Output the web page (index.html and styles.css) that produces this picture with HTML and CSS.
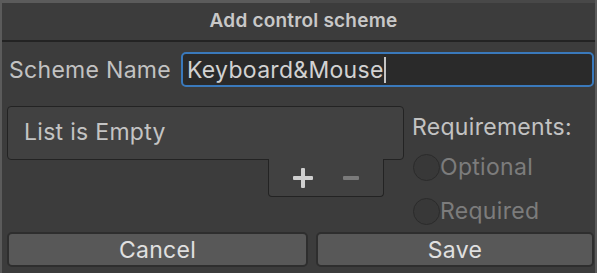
FILE: index.html
```html
<!DOCTYPE html>
<html lang="en">
<head>
    <meta charset="UTF-8">
    <meta name="viewport" content="width=device-width, initial-scale=1.0">
    <title>Add control scheme</title>
    <link rel="stylesheet" href="styles.css">
</head>
<body>
    <div class="window">
        <div class="top-strip"></div>
        <div class="titlebar">Add control scheme</div>

        <div class="content">
            <div class="name-row">
                <label for="schemeName">Scheme Name</label>
                <div class="text-field"><span id="schemeName">Keyboard&amp;Mouse</span><span class="caret"></span></div>
            </div>

            <div class="middle">
                <div class="list">
                    <div class="list-body">List is Empty</div>
                    <div class="list-footer">
                        <span class="plus"></span>
                        <span class="minus"></span>
                    </div>
                </div>

                <div class="requirements">
                    <div class="req-title">Requirements:</div>
                    <label class="radio"><span class="circle"></span>Optional</label>
                    <label class="radio"><span class="circle"></span>Required</label>
                </div>
            </div>

            <div class="buttons">
                <button class="cancel">Cancel</button>
                <button class="save">Save</button>
            </div>
        </div>
    </div>
</body>
</html>
```

FILE: styles.css
```css
html, body {
    margin: 0;
    height: 100%;
    background-color: #3e3e3e;
}
body {
    font-family: Inter, "Noto Sans", sans-serif;
    color: #c4c4c4;
    overflow: hidden;
}
.window {
    height: 273px;
    box-sizing: border-box;
    border-left: 2px solid #5b5b5b;
    border-right: 2px solid #5b5b5b;
    background-color: #3c3c3c;
    display: flex;
    flex-direction: column;
}
/* lighter tab edge on the left, darker on the right */
.top-strip {
    height: 3px;
    background: linear-gradient(to right, #5b5b5b 308px, #484848 308px);
}
.titlebar {
    height: 37px;
    line-height: 36px;
    text-align: center;
    font-weight: 600;
    font-size: 19px;
    letter-spacing: 0.2px;
    color: #c8c8c8;
    padding-left: 10px;
    border-bottom: 2px solid #232323;
    background-color: #3c3c3c;
}
.content {
    flex: 1;
    padding: 10px 1px 6px 5px;
    display: flex;
    flex-direction: column;
}
.name-row {
    display: flex;
    align-items: center;
    gap: 3px;
    height: 35px;
}
.name-row label {
    font-size: 23px;
    letter-spacing: 0.3px;
    color: #c2c2c2;
    padding-left: 2px;
    width: 169px;
}
.text-field {
    flex: 1;
    height: 35px;
    box-sizing: border-box;
    border: 2px solid #3a79bb;
    border-radius: 5px;
    background-color: #2a2a2a;
    color: #d2d2d2;
    font-size: 23px;
    letter-spacing: 0.3px;
    display: flex;
    align-items: center;
    padding-left: 4px;
}
.caret {
    width: 2px;
    height: 26px;
    background-color: #c4c4c4;
}
.middle {
    display: flex;
    margin-top: 19px;
    height: 124px;
}
.list {
    width: 397px;
    display: flex;
    flex-direction: column;
    align-items: flex-end;
}
.list-body {
    align-self: stretch;
    height: 54px;
    box-sizing: border-box;
    border: 1px solid #232323;
    border-radius: 4px;
    background-color: #414141;
    font-size: 23px;
    letter-spacing: 0.3px;
    color: #c4c4c4;
    padding: 11px 0 0 16px;
}
.list-footer {
    width: 116px;
    height: 38px;
    box-sizing: border-box;
    margin-right: 20px;
    margin-top: -1px;
    border: 1px solid #232323;
    border-top: none;
    border-radius: 0 0 4px 4px;
    background-color: #414141;
    display: flex;
    align-items: center;
    justify-content: center;
    gap: 30px;
}
.plus {
    position: relative;
    width: 20px;
    height: 20px;
}
.plus:before,
.plus:after {
    content: "";
    position: absolute;
    background-color: #cfcfcf;
    border-radius: 1px;
}
.plus:before {
    left: 0;
    right: 0;
    top: 8px;
    height: 4px;
}
.plus:after {
    top: 0;
    bottom: 0;
    left: 8px;
    width: 4px;
}
.minus {
    width: 16px;
    height: 4px;
    border-radius: 1px;
    background-color: #7a7a7a;
}
.requirements {
    margin-left: 8px;
    display: flex;
    flex-direction: column;
}
.req-title {
    font-size: 23px;
    letter-spacing: 0.3px;
    color: #c2c2c2;
    height: 30px;
    line-height: 30px;
    margin-top: 6px;
}
.radio {
    display: flex;
    align-items: center;
    font-size: 23px;
    letter-spacing: 0.3px;
    color: #7c7c7c;
    height: 30px;
    margin-top: 10px;
}
.radio + .radio {
    margin-top: 14px;
}
.circle {
    width: 27px;
    height: 27px;
    box-sizing: border-box;
    margin-left: 1px;
    border-radius: 50%;
    border: 1px solid #2b2b2b;
    background-color: #383838;
}
.buttons {
    display: flex;
    gap: 8px;
    margin-top: auto;
}
button {
    flex: 1;
    height: 35px;
    border: 2px solid #2e2e2e;
    border-radius: 5px;
    background-color: #585858;
    color: #e0e0e0;
    font-family: Inter, "Noto Sans", sans-serif;
    font-size: 23px;
    letter-spacing: 0.3px;
    padding: 0;
}
.cancel {
    flex: 0 0 301px;
}
```
